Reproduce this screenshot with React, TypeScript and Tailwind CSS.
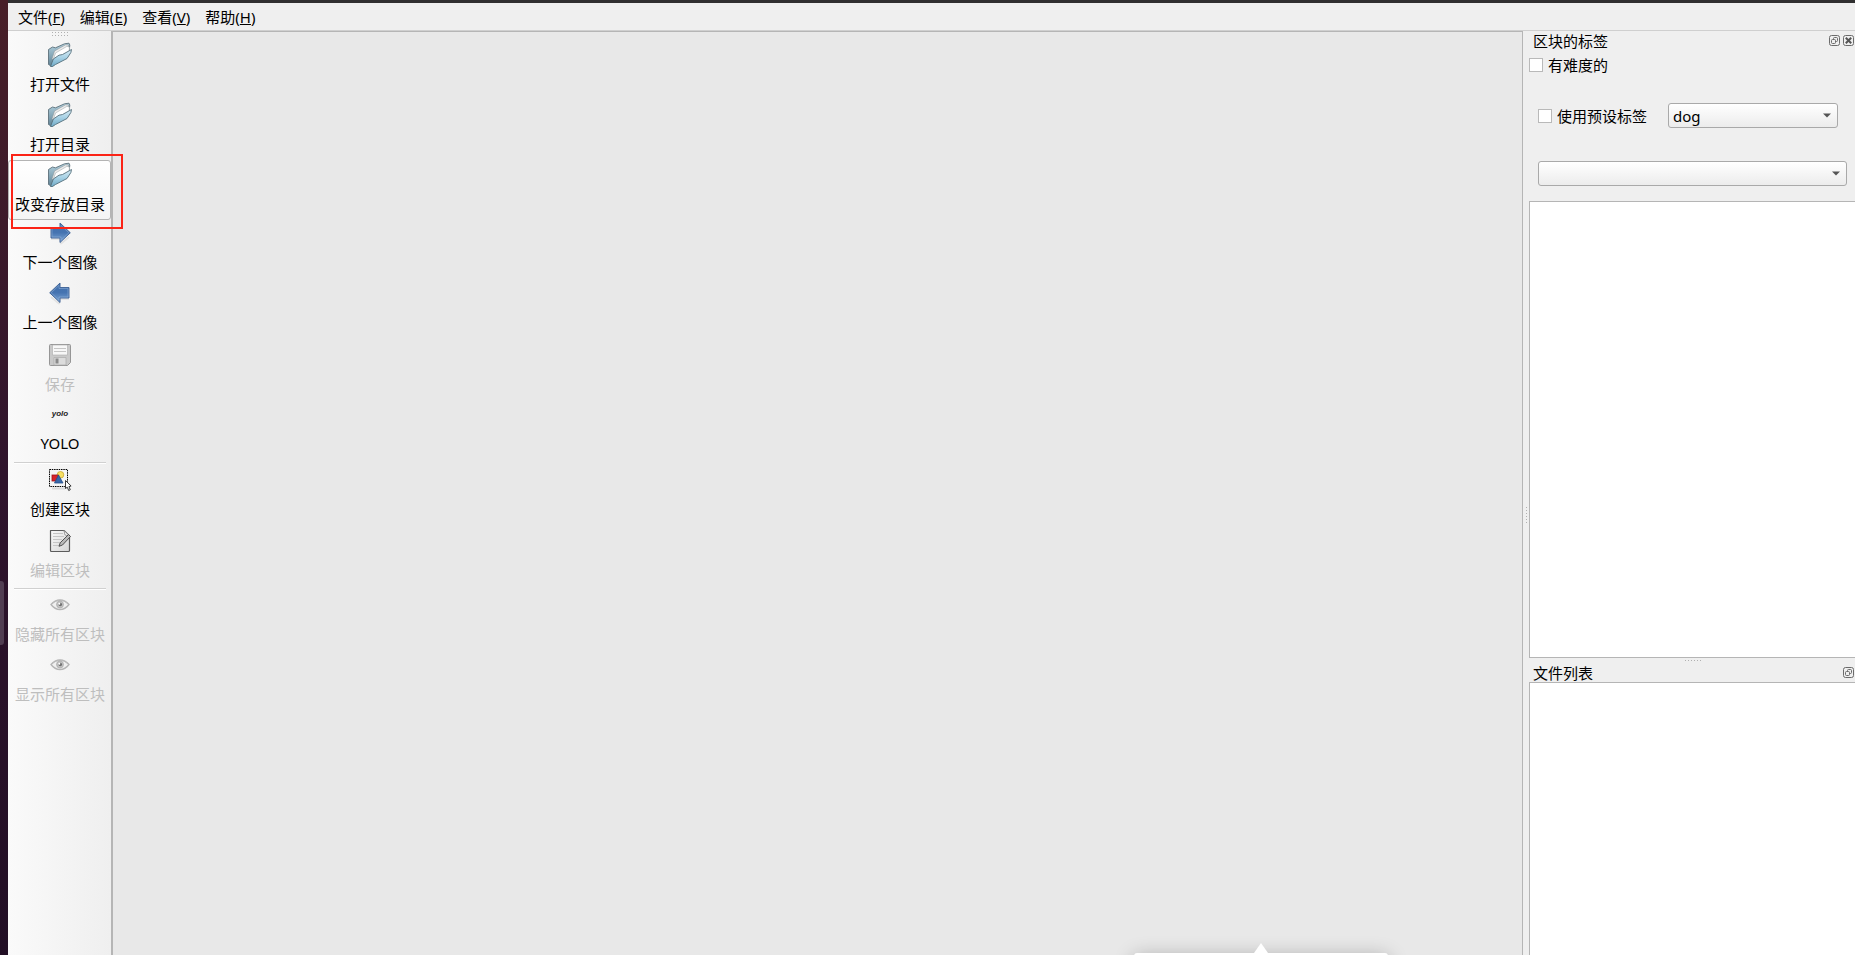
import { useState, type ReactNode } from "react";

const MENUS = [
  { label: "文件", accel: "F" },
  { label: "编辑", accel: "E" },
  { label: "查看", accel: "V" },
  { label: "帮助", accel: "H" },
];

function FolderIcon() {
  return (
    <svg width="26" height="26" viewBox="0 0 26 26">
      <defs>
        <linearGradient id="folderBack" x1="0" y1="0" x2="0" y2="1">
          <stop offset="0" stopColor="#b4d3e1" />
          <stop offset="1" stopColor="#5f8294" />
        </linearGradient>
        <linearGradient id="folderFront" x1="0" y1="0" x2="0" y2="1">
          <stop offset="0" stopColor="#d9edf6" />
          <stop offset=".5" stopColor="#a5d0e4" />
          <stop offset="1" stopColor="#6fa9c6" />
        </linearGradient>
      </defs>
      <path d="M1.500 22.500V7.500L5.500 5l3 .8L17.500 1.800l4.500-.6.8 1.800-.5 5L5 24.500z" fill="url(#folderBack)" stroke="#5d707a" strokeWidth=".9" strokeLinejoin="round" />
      <path d="M5 17L7.500 9 18.500 2.800l3 .2-1 7L6 18z" fill="#ececec" stroke="#8f979b" strokeWidth=".6" />
      <path d="M6 18.500l2.500-7.500L20 4.300l2.500 1L22 10 6.500 19z" fill="#fff" stroke="#a5abae" strokeWidth=".6" />
      <path d="M3.500 24.500L6.300 17 12 13.200l3.500-.7L24.500 7.500l-.6 3L20 16.500 8.500 22.500 5.500 24.500z" fill="url(#folderFront)" stroke="#56707d" strokeWidth=".9" strokeLinejoin="round" />
    </svg>
  );
}

function ArrowIcon({ left = false }: { left?: boolean }) {
  return (
    <svg width="24" height="24" viewBox="0 0 24 24">
      <defs>
        <linearGradient id="arrowFill" x1="0" y1="0" x2="0" y2="1">
          <stop offset="0" stopColor="#3f6eab" />
          <stop offset=".5" stopColor="#4674b1" />
          <stop offset="1" stopColor="#80a9d9" />
        </linearGradient>
      </defs>
      <g transform={left ? "matrix(-1 0 0 1 24 0)" : undefined}>
        <path d="M3 18h9l1 4.500L21 16" fill="none" stroke="#000" strokeWidth="2" strokeLinejoin="round" opacity=".07" />
        <path d="M3 6.500h9V2L22.300 11.800 12 21.500V17H3z" fill="url(#arrowFill)" stroke="#46699b" strokeWidth="1" strokeLinejoin="round" />
        <path d="M4 7.500h9V4.300l7.800 7.500L13 19.200V16H4z" fill="none" stroke="#8cacd6" strokeWidth=".8" opacity=".7" />
      </g>
    </svg>
  );
}

function SaveIcon() {
  return (
    <svg width="24" height="24" viewBox="0 0 24 24">
      <path d="M2.500 1.500h19a1 1 0 0 1 1 1v17l-3 3h-17a1 1 0 0 1-1-1v-19a1 1 0 0 1 1-1z" fill="#c9c9c9" stroke="#969696" />
      <path d="M4.500 2h15v10h-15z" fill="#f7f7f7" stroke="#ababab" strokeWidth=".6" />
      <path d="M6 5.500h12M6 8.500h12" stroke="#c5c5c5" />
      <path d="M6 14.500h12v7.500H6z" fill="#dcdcdc" stroke="#aaa" strokeWidth=".7" />
      <path d="M7.500 15.500h3v5h-3z" fill="#8a8a8a" />
    </svg>
  );
}

function YoloIcon() {
  return (
    <span className="pb-px font-['Liberation_Sans',sans-serif] text-[8px] leading-none font-bold italic text-[#222]">
      yolo
    </span>
  );
}

function CreateIcon() {
  return (
    <svg width="24" height="24" viewBox="0 0 24 24">
      <path d="M4 20.500h13" stroke="#000" strokeWidth="2" opacity=".1" />
      <rect x="1.500" y="1.500" width="18" height="17" fill="#f6f6f6" stroke="#000" strokeWidth="1" strokeDasharray="1.500 .8" />
      <circle cx="12.500" cy="6.800" r="3.300" fill="#f7df62" stroke="#c8a72d" strokeWidth=".8" />
      <rect x="4" y="7" width="6.500" height="6" fill="#d8232a" stroke="#9e1219" strokeWidth=".8" />
      <path d="M10.500 7l4.500 8H6.500z" fill="#3767a8" stroke="#244e8a" strokeWidth=".8" />
      <path d="M17.500 12.500v8l1.800-1.300 1.400 3.300 1.600-.8-1.400-3.100 2.200-.6z" fill="#fff" stroke="#222" strokeWidth=".9" strokeLinejoin="round" />
    </svg>
  );
}

function EditIcon() {
  return (
    <svg width="24" height="24" viewBox="0 0 24 24">
      <defs>
        <linearGradient id="sheet" x1="0" y1="0" x2="1" y2="1">
          <stop offset="0" stopColor="#fafafa" />
          <stop offset="1" stopColor="#d6d6d6" />
        </linearGradient>
      </defs>
      <path d="M2.500 1.500H16l5.500 5.500v14.500a1 1 0 0 1-1 1h-17a1 1 0 0 1-1-1z" fill="url(#sheet)" stroke="#5c5c5c" strokeWidth="1.200" strokeLinejoin="round" />
      <path d="M5 4.500h10M5 7.500h11M5 10.500h9M5 13.500h7M5 16.500h6" stroke="#c6c6c6" />
      <path d="M16 1.500L17 6l4.500 1z" fill="#fff" stroke="#888" strokeWidth=".8" />
      <path d="M20.500 5.500l2 2L14.500 16l-3.500 1.300 1.200-3.500z" fill="#b9b9b9" stroke="#444" strokeWidth=".9" strokeLinejoin="round" />
    </svg>
  );
}

function EyeIcon() {
  return (
    <svg width="20" height="14" viewBox="0 0 20 14">
      <path d="M1 6.500C4 3 7 2 10 2s6 1 9 4.500C16 10.500 13 11.500 10 11.500S4 10.500 1 6.500z" fill="#f0f0f0" stroke="#b4b4b4" strokeWidth="1.300" />
      <path d="M3 5C7 1.500 13 1.500 17 5" fill="none" stroke="#bcbcbc" />
      <circle cx="10" cy="6.500" r="3.500" fill="#c2c2c2" stroke="#a2a2a2" strokeWidth=".6" />
      <circle cx="10.300" cy="6.500" r="1.800" fill="#707070" />
      <circle cx="9.300" cy="5.800" r="1" fill="#fff" />
    </svg>
  );
}

type Tool = {
  label: string;
  icon: ReactNode;
  pad: string;
  disabled?: boolean;
  active?: boolean;
};

const FILE_TOOLS: Tool[] = [
  { label: "打开文件", icon: <FolderIcon />, pad: "pt-[3px]" },
  { label: "打开目录", icon: <FolderIcon />, pad: "pt-[3px]" },
  { label: "改变存放目录", icon: <FolderIcon />, pad: "pt-[2px]", active: true },
  { label: "下一个图像", icon: <ArrowIcon />, pad: "pt-px" },
  { label: "上一个图像", icon: <ArrowIcon left />, pad: "pt-px" },
  { label: "保存", icon: <SaveIcon />, pad: "pt-[3px]", disabled: true },
  { label: "YOLO", icon: <YoloIcon />, pad: "pt-[2px]" },
];

const BOX_TOOLS: Tool[] = [
  { label: "创建区块", icon: <CreateIcon />, pad: "pt-[2px]" },
  { label: "编辑区块", icon: <EditIcon />, pad: "pt-[3px]", disabled: true },
];

const VIEW_TOOLS: Tool[] = [
  { label: "隐藏所有区块", icon: <EyeIcon />, pad: "pt-px", disabled: true },
  { label: "显示所有区块", icon: <EyeIcon />, pad: "pt-px", disabled: true },
];

function ToolButton({ tool }: { tool: Tool }) {
  const look = tool.active
    ? "rounded-[3px] border border-[#b4b4b4] bg-gradient-to-b from-white to-[#f5f5f5]"
    : "";
  return (
    <div className="relative">
      <button
        type="button"
        disabled={tool.disabled}
        className={`flex h-[60px] w-full flex-col items-center gap-[6px] whitespace-nowrap pl-px disabled:text-[#bebebe] ${tool.pad} ${look}`}
      >
        <span className="flex h-6 items-center justify-center">{tool.icon}</span>
        <span className="leading-[22px]">{tool.label}</span>
      </button>
      {/* Highlight frame */}
      {tool.active && (
        <div className="pointer-events-none absolute -top-[6px] -right-3 -bottom-[9px] left-[3px] z-10 border-2 border-[#fb2316]" />
      )}
    </div>
  );
}

function Separator() {
  return (
    <div className="flex h-[6px] items-center pr-[5px] pl-[6px]">
      <div className="h-[2px] w-full border-t border-[#d0d0d0] bg-white" />
    </div>
  );
}

function Dots({ rows, cols }: { rows: number; cols: number }) {
  return (
    <svg width={cols * 3} height={rows * 3} fill="#b0b0b0">
      {Array.from({ length: rows * cols }, (_, i) => (
        <rect key={i} x={(i % cols) * 3} y={Math.floor(i / cols) * 3} width="1" height="1" />
      ))}
    </svg>
  );
}

function FloatButton() {
  return (
    <button type="button" aria-label="浮动">
      <svg width="12" height="12" viewBox="0 0 12 12" fill="none" stroke="#6b6b6b">
        <rect x=".5" y=".5" width="10" height="10" rx="2" />
        <rect x="2.500" y="4.500" width="4" height="4" rx="1" />
        <path d="M4.500 4V3.500a1 1 0 0 1 1-1h2a1 1 0 0 1 1 1v2a1 1 0 0 1-1 1H7" />
      </svg>
    </button>
  );
}

function CloseButton() {
  return (
    <button type="button" aria-label="关闭">
      <svg width="12" height="12" viewBox="0 0 12 12" fill="none" stroke="#6b6b6b">
        <rect x=".5" y=".5" width="10" height="10" rx="2" />
        <path d="M2.800 2.800l5.400 5.400M8.200 2.800l-5.400 5.400" stroke="#555" strokeWidth="2" />
      </svg>
    </button>
  );
}

function Check({ id, label }: { id: string; label: string }) {
  return (
    <div className="flex items-center gap-[5px]">
      <input
        id={id}
        type="checkbox"
        className="size-[14px] appearance-none border border-[#b9b9b9] bg-white checked:bg-[#777]"
      />
      <label htmlFor={id} className="leading-[22px]">{label}</label>
    </div>
  );
}

function Combo({ label, options, className }: { label: string; options: string[]; className: string }) {
  const [value, setValue] = useState(options[0]);
  return (
    <div className={`relative ${className}`}>
      <select
        aria-label={label}
        value={value}
        onChange={(e) => setValue(e.target.value)}
        className="block h-[25px] w-full appearance-none rounded-[3px] border border-[#a9a9a9] bg-gradient-to-b from-white to-[#ececec] px-1 leading-[22px]"
      >
        {options.map((o) => (
          <option key={o}>{o}</option>
        ))}
      </select>
      <svg className="pointer-events-none absolute top-[10px] right-[7px]" width="8" height="5" viewBox="0 0 8 5">
        <path d="M0 .5h8L4 4.500z" fill="#555" />
      </svg>
    </div>
  );
}

export default function App() {
  return (
    <div className="flex h-screen overflow-hidden bg-[#efefef] font-['Noto_Sans','Noto_Sans_CJK_SC',sans-serif] text-[15px] text-black">
      {/* Desktop edge */}
      <div className="flex w-2 shrink-0 items-center bg-gradient-to-b from-[#481f28] via-[#2f142c] to-[#220f25]">
        <div className="mt-[271px] h-16 w-1 rounded-r-[3px] bg-[#513e52]" />
      </div>

      <div className="flex min-w-0 flex-1 flex-col">
        <div className="h-[3px] shrink-0 bg-[#302f30]" />
        <nav className="flex h-7 shrink-0 items-center gap-[15px] border-b border-[#cfcfcf] px-[10px] pt-px">
          {MENUS.map((m) => (
            <button key={m.accel} type="button" className="leading-[22px]">
              {m.label}(<span className="underline">{m.accel}</span>)
            </button>
          ))}
        </nav>

        <div className="flex min-h-0 flex-1">
          <aside className="w-[103px] shrink-0 bg-gradient-to-r from-[#fafafa] to-[#efefef]">
            <div className="flex h-[9px] items-start justify-center pt-px pl-[3px]">
              <Dots rows={2} cols={6} />
            </div>
            {FILE_TOOLS.map((t) => (
              <ToolButton key={t.label} tool={t} />
            ))}
            <Separator />
            {BOX_TOOLS.map((t) => (
              <ToolButton key={t.label} tool={t} />
            ))}
            <Separator />
            {VIEW_TOOLS.map((t) => (
              <ToolButton key={t.label} tool={t} />
            ))}
          </aside>

          {/* Canvas */}
          <main className="relative min-w-0 flex-1 overflow-hidden border-t border-r border-l-2 border-[#b5b5b5] bg-[#e8e8e8]">
            <div className="absolute right-[134px] -bottom-[18px] h-5 w-[254px] rounded-[3px] bg-white shadow-[0_4px_20px_rgba(0,0,0,0.3)]">
              <svg className="absolute -top-[10px] left-[120px]" width="14" height="11" viewBox="0 0 14 11">
                <path d="M0 11V10L7 0l7 10v1z" fill="#fff" />
              </svg>
            </div>
          </main>

          <div className="flex w-[6px] shrink-0 items-center justify-center pt-[45px] pl-[2px]">
            <Dots rows={6} cols={1} />
          </div>

          {/* Docks */}
          <div className="flex w-[326px] shrink-0 flex-col">
            <header className="flex h-5 items-center justify-between pl-1">
              <h2 className="leading-5">区块的标签</h2>
              <div className="flex gap-[2px]">
                <FloatButton />
                <CloseButton />
              </div>
            </header>
            <div className="pt-[3px]">
              <Check id="difficult" label="有难度的" />
            </div>
            <div className="flex items-center gap-[21px] px-[9px] pt-[27px]">
              <Check id="default-label" label="使用预设标签" />
              <Combo label="预设标签" options={["dog"]} className="mr-2 flex-1" />
            </div>
            <div className="pt-[33px] pr-2 pl-[9px]">
              <Combo label="标签过滤" options={[""]} className="w-full" />
            </div>
            <div className="mt-[15px] h-[457px] border-y border-l border-[#b5b5b5] bg-white" />
            <div className="flex h-[5px] items-center justify-center pt-px pl-1">
              <Dots rows={1} cols={6} />
            </div>
            <header className="flex h-[19px] items-center justify-between pl-1">
              <h2 className="leading-5">文件列表</h2>
              <FloatButton />
            </header>
            <div className="min-h-0 flex-1 border-t border-l border-[#b5b5b5] bg-white" />
          </div>
        </div>
      </div>
    </div>
  );
}
